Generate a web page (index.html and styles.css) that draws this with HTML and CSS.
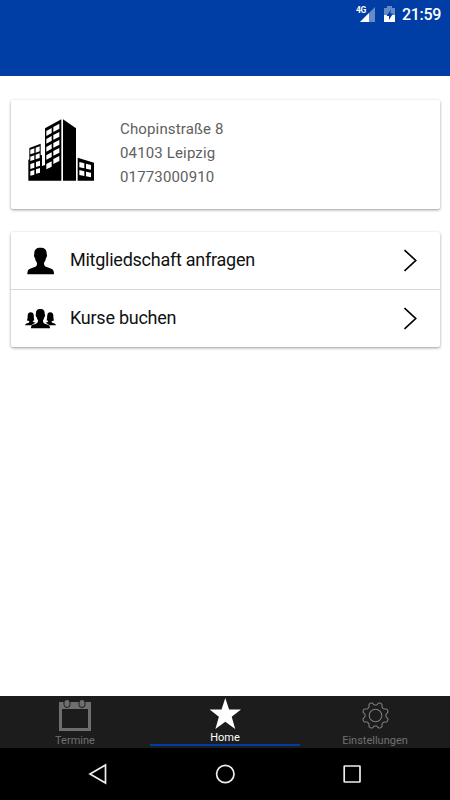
FILE: index.html
```html
<!DOCTYPE html>
<html lang="de">
<head>
  <meta charset="UTF-8">
  <meta name="viewport" content="width=device-width, initial-scale=1.0">
  <title>Home</title>
  <link rel="stylesheet" href="styles.css">
</head>
<body>

<header>
  <div class="status">
    <svg class="signal" width="20" height="18" viewBox="0 0 20 18">
      <path d="M19 2V17H4z" fill="#668bc9"/>
      <path d="M13 8V17H4z" fill="#fff"/>
      <text x="0" y="8">4G</text>
    </svg>
    <svg class="battery" width="11" height="17" viewBox="0 0 11 17">
      <path d="M0 2H3V0H8V2H11V9H0z" fill="#668bc9"/>
      <path d="M0 9H11V16H0z" fill="#fff"/>
      <path d="M7 3.5L2.5 10H5V14L9 7.5H6.2z" fill="#003da5"/>
    </svg>
    <span class="clock">21:59</span>
  </div>
</header>

<main>
  <section class="card contact">
    <svg width="85" height="80" viewBox="0 0 255 240">
      <path d="M25 212V150L28 148V114L62 101V135L66 136V168L75 165V55L124 28V212z"/>
      <path d="M129 28L168 55V212H129z"/>
      <path d="M173 143L222 158V212H173z"/>
      <g fill="#fff">
        <path d="M79 63L95 54V69L79 78zM100 51L118 41V56L100 66z"/>
        <path d="M79 87L95 78V92L79 101zM100 75L118 66V80L100 89z"/>
        <path d="M79 111L95 102V116L79 125zM100 99L118 90V104L100 113z"/>
        <path d="M79 136L95 127V141L79 149zM100 123L118 114V128L100 137z"/>
        <path d="M79 162L95 154V170L79 178zM100 147L118 138V153L100 162z"/>
        <path d="M31 119L43 115V129L31 133zM47 113L59 109V124L47 128z"/>
        <path d="M31 140L43 136V149L31 153zM47 134L59 130V144L47 148z"/>
        <path d="M31 162L43 158V173L31 177zM48 156L60 152V167L48 171z"/>
        <path d="M31 184L43 180V194L31 197zM48 178L60 174V188L48 191z"/>
        <path d="M178 156L193 160V175L178 172zM198 161L213 165V179L198 176z"/>
        <path d="M178 180L193 184V198L178 195zM198 185L213 188V202L198 199z"/>
      </g>
    </svg>
    <address>
      <div>Chopinstraße 8</div>
      <div>04103 Leipzig</div>
      <div>01773000910</div>
    </address>
  </section>

  <section class="card menu">
    <a class="row">
      <svg width="40" height="40" viewBox="0 0 120 120">
        <path d="M61 20C48 20 42 27 43 40C41 41 42 48 45 51C46 58 48 62 51 65C51 73 50 76 44 78L30 83C24 85 22 90 22 100H102C102 90 100 85 94 83L80 78C74 76 72 73 72 65C75 62 77 58 78 51C81 48 82 41 80 40C81 27 75 20 61 20z"/>
      </svg>
      <span>Mitgliedschaft anfragen</span>
      <svg class="arrow" width="14" height="24" viewBox="0 0 14 24"><path d="M.5 1L11.7 11.5L.5 22"/></svg>
    </a>
    <a class="row">
      <svg width="40" height="40" viewBox="0 0 120 120">
        <path id="side" d="M32 40C26 40 23 44 23 50C23 57 22 61 21 64C24 66 27 66 28 67C28 71 26 72 22 73C18 74 16 76 15 79H35C38 75 42 73 47 71C42 70 39 69 38 66L43 64C41 58 42 53 41 49C41 43 38 40 32 40z"/>
        <use href="#side" transform="matrix(-1 0 0 1 123 0)"/>
        <path d="M61 30C51 30 47 36 48 45C46 46 47 52 50 55C51 59 52 62 54 64C54 70 53 72 48 74L39 77C34 79 33 82 33 88H90C90 82 88 79 84 77L74 74C70 72 69 70 69 64C71 62 72 59 73 55C76 52 76 46 74 45C75 36 71 30 61 30z"/>
      </svg>
      <span>Kurse buchen</span>
      <svg class="arrow" width="14" height="24" viewBox="0 0 14 24"><path d="M.5 1L11.7 11.5L.5 22"/></svg>
    </a>
  </section>
</main>

<nav class="tabs">
  <a class="tab">
    <svg width="36" height="36" viewBox="0 0 36 36">
      <path d="M2 6H34V35H2zM5 13V32H31V13z" fill="#6e6e6e" fill-rule="evenodd"/>
      <rect x="7" y="3.5" width="6" height="8" rx="3" fill="#6e6e6e" stroke="#1c1c1c"/>
      <rect x="22" y="3.5" width="6" height="8" rx="3" fill="#6e6e6e" stroke="#1c1c1c"/>
    </svg>
    <span>Termine</span>
  </a>
  <a class="tab active">
    <svg width="36" height="36" viewBox="0 0 36 36">
      <path d="M18.3 2L22.1 13.4H34L24.7 20.8L28.2 33L18.3 25.8L8.4 33L11.9 20.8L2.6 13.4H14.5z" fill="#fff"/>
    </svg>
    <span>Home</span>
  </a>
  <a class="tab">
    <svg width="36" height="36" viewBox="0 0 36 36">
      <g fill="none" stroke="#7c7c7c" stroke-width="1.1" stroke-linejoin="round">
        <path id="gear"/>
        <circle cx="18.5" cy="19.5" r="6.3"/>
      </g>
    </svg>
    <span>Einstellungen</span>
  </a>
</nav>

<footer>
  <svg width="20" height="22" viewBox="0 0 20 22"><path d="M17.5 2V20L2 11z"/></svg>
  <svg width="20" height="22" viewBox="0 0 20 22"><circle cx="10.3" cy="11" r="8.7"/></svg>
  <svg width="20" height="22" viewBox="0 0 20 22"><rect x="2.2" y="3" width="15.8" height="16" rx=".5"/></svg>
</footer>

<script>
  // outline of the settings gear, eight teeth round the centre
  const points = [];
  for (let i = 0; i < 96; i++) {
    const angle = i / 96 * Math.PI * 2;
    const wave = Math.cos(angle * 8 + Math.PI);
    const r = 11.8 + 1.4 * Math.tanh(wave * 2.2);
    points.push((18.5 + r * Math.cos(angle)).toFixed(2) + ' ' + (19.5 + r * Math.sin(angle)).toFixed(2));
  }
  document.getElementById('gear').setAttribute('d', 'M' + points.join('L') + 'z');
</script>

</body>
</html>
```

FILE: styles.css
```css
body {
  font-family: Roboto, sans-serif;
  background-color: #fff;
  display: flex;
  flex-direction: column;
  height: 100vh;
  margin: 0;
}

header {
  height: 76px;
  background-color: #003da5;
}

.status {
  display: flex;
  justify-content: flex-end;
  align-items: flex-start;
  padding: 5px 9px 0 0;
  color: #fff;
}

.signal text {
  font-size: 8.5px;
  font-weight: 700;
  letter-spacing: -0.5px;
  fill: #fff;
}

.battery {
  margin: 1px 7px 0 8px;
}

.clock {
  font-size: 16px;
  font-weight: 500;
  line-height: 19px;
  letter-spacing: -0.3px;
}

main {
  flex: 1;
  padding: 24px 10px 0;
}

.card {
  background-color: #fff;
  border-radius: 2px;
  box-shadow: 0 1px 3px rgba(0, 0, 0, 0.4);
  margin: 0 0 23px 1px;
}

.contact {
  display: flex;
  height: 109px;
  box-sizing: border-box;
  padding: 10px 9px;
}

address {
  font-style: normal;
  font-size: 15px;
  line-height: 24px;
  letter-spacing: 0.15px;
  color: #606060;
  margin: 7px 0 0 15px;
}

.row {
  display: flex;
  align-items: center;
  height: 57px;
  padding: 0 22px 0 9px;
  font-size: 18px;
  letter-spacing: -0.25px;
  color: #111;
}

.row span {
  flex: 1;
  margin: -2px 0 0 10px;
}

.row + .row {
  border-top: 1px solid #d8d8d8;
}

.arrow path {
  fill: none;
  stroke: #000;
  stroke-width: 1.7;
}

.tabs {
  display: flex;
  height: 52px;
  background-color: #1c1c1c;
}

.tab {
  flex: 1;
  display: flex;
  flex-direction: column;
  align-items: center;
  box-sizing: border-box;
  font-size: 11px;
  line-height: 14px;
  color: #707070;
}

.tab span {
  margin-top: 2px;
}

.active {
  color: #fff;
  height: 50px;
  border-bottom: 2px solid #003da5;
}

.active svg {
  flex-shrink: 0;
}

.active span {
  line-height: 12px;
  margin-top: 0;
}

footer {
  display: flex;
  align-items: center;
  justify-content: space-between;
  height: 52px;
  box-sizing: border-box;
  padding: 0 88px;
  background-color: #000;
}

footer svg {
  fill: none;
  stroke: #eee;
  stroke-width: 1.7;
}
```
